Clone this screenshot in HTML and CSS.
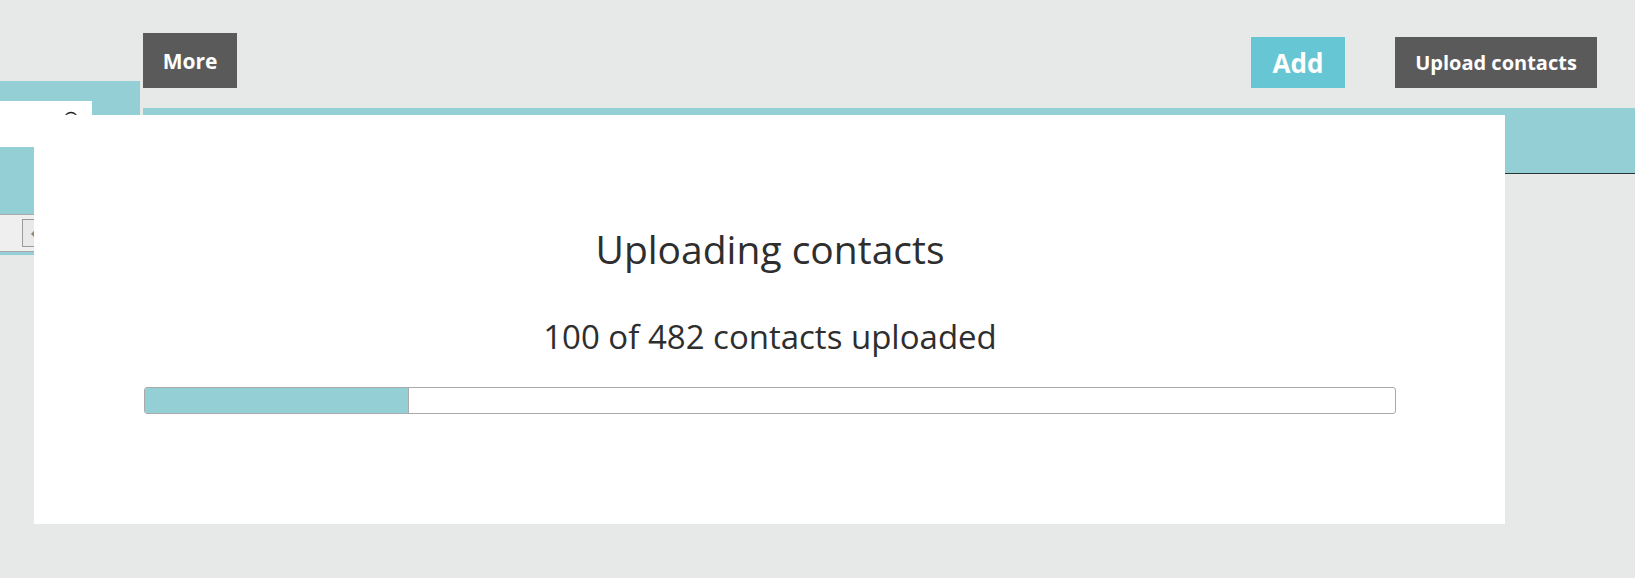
FILE: index.html
```html
<!DOCTYPE html>
<html lang="en">
<head>
    <meta charset="UTF-8">
    <meta name="viewport" content="width=device-width, initial-scale=1.0">
    <title>Contacts</title>
    <link rel="stylesheet" href="styles.css">
</head>
<body>
    <div class="layout">
        <div class="sidebar">
            <div class="sidebar-panel">
                <div class="search-box">
                    <svg class="search-icon" width="16" height="20" viewBox="0 0 16 20">
                        <circle cx="7" cy="8" r="6.5" fill="none" stroke="#222" stroke-width="1.3"/>
                        <line x1="11.5" y1="12.5" x2="15" y2="17" stroke="#222" stroke-width="1.6"/>
                    </svg>
                </div>
            </div>
            <div class="sidebar-row">
                <button class="spin-btn">&#9670;</button>
            </div>
        </div>

        <div class="main">
            <div class="toolbar">
                <button class="btn btn-dark btn-more">More</button>
                <button class="btn btn-add">Add</button>
                <button class="btn btn-dark btn-upload">Upload contacts</button>
            </div>
            <div class="list-header"></div>
        </div>
    </div>

    <div class="modal">
        <h2 class="modal-title">Uploading contacts</h2>
        <p class="modal-status">100 of 482 contacts uploaded</p>
        <div class="progress">
            <div class="progress-fill" style="width: 21%"></div>
        </div>
    </div>
</body>
</html>
```

FILE: styles.css
```css
body {
    font-family: "Open Sans", "DejaVu Sans", sans-serif;
    margin: 0;
    height: 578px;
    overflow: hidden;
    background-color: #e7e9e8;
    color: #2e2e2e;
}

.layout {
    display: flex;
    align-items: flex-start;
}

/* left column, mostly hidden under the dialog */
.sidebar {
    width: 140px;
    flex-shrink: 0;
    margin-top: 81px;
}

.sidebar-panel {
    background: #95cfd6;
    padding-top: 20px;
    height: 133px;
    box-sizing: border-box;
}

.search-box {
    position: relative;
    width: 92px;
    height: 46px;
    background: #fff;
}

.search-icon {
    position: absolute;
    left: 64px;
    top: 10px;
}

.sidebar-row {
    height: 38px;
    background: #efefef;
    border-top: 1px solid #a9a9a9;
    border-bottom: 1px solid #a9a9a9;
    box-shadow: 0 3px 0 #95cfd6;
    padding: 4px 0 0 22px;
    box-sizing: border-box;
}

.spin-btn {
    width: 26px;
    height: 28px;
    padding: 0;
    border: 1px solid #9a9a9a;
    background: #e9e9e9;
    color: #888;
    font-size: 12px;
}

.main {
    flex: 1;
    margin-left: 3px;
}

.toolbar {
    display: flex;
    align-items: flex-end;
    height: 88px;
    padding-right: 38px;
    box-sizing: border-box;
}

.btn {
    border: none;
    color: #fff;
    font-family: "Open Sans", "DejaVu Sans", sans-serif;
    font-weight: bold;
    padding: 0;
    cursor: pointer;
}

.btn-dark {
    background: #5a5a5a;
    height: 51px;
}

.btn-more {
    width: 94px;
    height: 55px;
    font-size: 21px;
}

.btn-add {
    margin-left: auto;
    width: 94px;
    height: 51px;
    background: #67c6d3;
    font-size: 26px;
}

.btn-upload {
    margin-left: 50px;
    width: 202px;
    font-size: 20px;
}

.list-header {
    margin-top: 20px;
    height: 65px;
    background: #95cfd6;
    border-bottom: 1px solid #2b3535;
}

/* upload dialog */
.modal {
    position: absolute;
    left: 34px;
    top: 115px;
    width: 1471px;
    height: 409px;
    background: #fff;
    padding: 0 109px 0 110px;
    box-sizing: border-box;
    text-align: center;
}

.modal-title {
    margin: 109px 0 0;
    font-size: 39px;
    font-weight: normal;
    line-height: 50px;
}

.modal-status {
    margin: 43px 0 0;
    font-size: 33px;
    line-height: 40px;
}

.progress {
    margin-top: 30px;
    height: 27px;
    border: 1px solid #aaa;
    border-radius: 3px;
    box-sizing: border-box;
    overflow: hidden;
    text-align: left;
}

.progress-fill {
    height: 100%;
    background: #95cfd6;
    border-right: 1px solid #aaa;
}
```
